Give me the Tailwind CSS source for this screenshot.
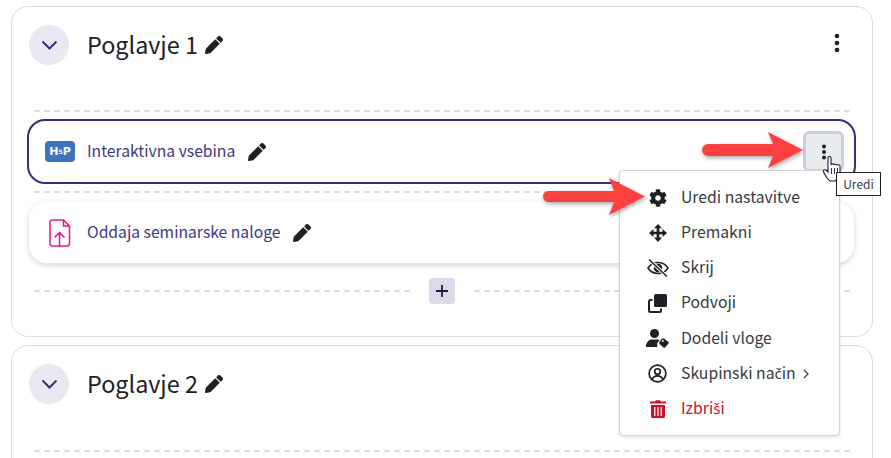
<!DOCTYPE html>
<html><head><meta charset="utf-8"><script src="https://cdn.jsdelivr.net/npm/@tailwindcss/browser@4"></script></head>
<body class="bg-white overflow-hidden font-['Noto_Sans_CJK_SC',sans-serif] text-[#1d2125]">
<div class="relative w-[891px] h-[458px] overflow-hidden">
  <div class="flex flex-col gap-[8px] pl-[11px] pr-[18px] pt-[6px]">
    <section class="h-[331px] border border-[#dcdcdc] rounded-[17px] pt-[18px] px-[22px]">
      <div class="flex items-center h-[40px] -ml-[5px]">
        <span class="w-[40px] h-[40px] rounded-full bg-[#eae8f3] flex items-center justify-center"><svg width="17" height="10" viewBox="0 0 17 10" fill="none" stroke="#3a2c7c" stroke-width="2"><path d="M1.500 1.500l7 7 7-7"/></svg></span>
        <h3 class="ml-[18px] text-[23.4px] leading-[40px] mb-[2px]">Poglavje 1</h3>
        <svg class="ml-[7px] mb-[1px]" width="18" height="18" viewBox="0 0 512 512" fill="#1d2125"><path d="M497.9 142.1l-46.1 46.1c-4.7 4.7-12.3 4.7-17 0l-111-111c-4.7-4.7-4.7-12.3 0-17l46.1-46.1c18.7-18.7 49.1-18.7 67.9 0l60.1 60.1c18.8 18.7 18.8 49.1 0 67.9zM284.2 99.8L21.6 362.4.4 483.9c-2.9 16.4 11.4 30.6 27.8 27.8l121.5-21.3 262.6-262.6c4.7-4.7 4.7-12.3 0-17l-111-111c-4.8-4.7-12.4-4.7-17.1 0z"/></svg>
        <svg class="ml-auto mr-[5px] mb-[5px]" width="16" height="20" viewBox="0 0 16 20" fill="#1d2125"><circle cx="8" cy="3" r="2.300"/><circle cx="8" cy="10" r="2.300"/><circle cx="8" cy="17" r="2.300"/></svg>
      </div>
      <div class="mt-[45px] h-[2px] bg-[repeating-linear-gradient(90deg,#dcdcdc_0_6px,transparent_6px_10px)]"></div>
      <div class="mt-[7px] -ml-[7px] -mr-[6px] h-[65px] border-2 border-[#3a2c7c] rounded-[18px] flex items-center pl-[16px] pr-[10px] bg-white">
        <span class="w-[30px] h-[21px] rounded-[4px] bg-[#3c74bd] flex items-center justify-center text-white font-['DejaVu_Sans',sans-serif] font-bold leading-none"><span class="text-[11px]">H</span><span class="text-[6px]">5</span><span class="text-[11px]">P</span></span>
        <span class="ml-[12px] text-[#3f3585] text-[15.7px] leading-[20px] mb-[2px]">Interaktivna vsebina</span>
        <svg class="ml-[13px]" width="18" height="18" viewBox="0 0 512 512" fill="#1d2125"><path d="M497.9 142.1l-46.1 46.1c-4.7 4.7-12.3 4.7-17 0l-111-111c-4.7-4.7-4.7-12.3 0-17l46.1-46.1c18.7-18.7 49.1-18.7 67.9 0l60.1 60.1c18.8 18.7 18.8 49.1 0 67.9zM284.2 99.8L21.6 362.4.4 483.9c-2.9 16.4 11.4 30.6 27.8 27.8l121.5-21.3 262.6-262.6c4.7-4.7 4.7-12.3 0-17l-111-111c-4.8-4.7-12.4-4.7-17.1 0z"/></svg>
        <span class="ml-auto w-[41px] h-[41px] rounded-[6px] border-[3px] border-[#cfcde0] bg-[#e9ecef] flex items-center justify-center"><svg width="8" height="16" viewBox="0 0 8 16" fill="#1d2125"><circle cx="4" cy="2.500" r="2"/><circle cx="4" cy="8" r="2"/><circle cx="4" cy="13.500" r="2"/></svg></span>
      </div>
      <div class="mt-[7px] h-[2px] bg-[repeating-linear-gradient(90deg,#dcdcdc_0_6px,transparent_6px_10px)]"></div>
      <div class="mt-[9px] -ml-[5px] -mr-[4px] h-[61px] rounded-[18px] bg-white shadow-[0_2px_6px_rgba(0,0,0,0.18)] flex items-center pl-[20px]">
        <svg width="22" height="28" viewBox="0 0 22 28" fill="none" stroke="#f0138f" stroke-width="1.500"><path d="M3.500 1h11l6 6v17.500a2.500 2.500 0 0 1-2.500 2.500H3.500a2.500 2.500 0 0 1-2.500-2.500V3.500A2.500 2.500 0 0 1 3.500 1zM14.500 1v6h6M10.500 28V14M5.500 18.500l5-5 5 5"/></svg>
        <span class="ml-[16px] text-[#3f3585] text-[15.7px] leading-[20px] mb-[2px]">Oddaja seminarske naloge</span>
        <svg class="ml-[13px]" width="18" height="18" viewBox="0 0 512 512" fill="#1d2125"><path d="M497.9 142.1l-46.1 46.1c-4.7 4.7-12.3 4.7-17 0l-111-111c-4.7-4.7-4.7-12.3 0-17l46.1-46.1c18.7-18.7 49.1-18.7 67.9 0l60.1 60.1c18.8 18.7 18.8 49.1 0 67.9zM284.2 99.8L21.6 362.4.4 483.9c-2.9 16.4 11.4 30.6 27.8 27.8l121.5-21.3 262.6-262.6c4.7-4.7 4.7-12.3 0-17l-111-111c-4.8-4.7-12.4-4.7-17.1 0z"/></svg>
      </div>
      <div class="mt-[15px] flex items-center h-[26px]">
        <div class="flex-1 h-[2px] bg-[repeating-linear-gradient(90deg,#dcdcdc_0_6px,transparent_6px_10px)]"></div>
        <span class="mx-[19px] w-[26px] h-[26px] rounded-[4px] bg-[#dcdaea] flex items-center justify-center"><svg width="14" height="14" viewBox="0 0 14 14" stroke="#1d1748" stroke-width="1.800"><path d="M7 1v12M1 7h12"/></svg></span>
        <div class="flex-1 h-[2px] bg-[repeating-linear-gradient(90deg,#dcdcdc_0_6px,transparent_6px_10px)]"></div>
      </div>
    </section>
    <section class="h-[200px] border border-[#dcdcdc] rounded-[17px] pt-[18px] px-[22px]">
      <div class="flex items-center h-[40px] -ml-[5px]">
        <span class="w-[40px] h-[40px] rounded-full bg-[#eae8f3] flex items-center justify-center"><svg width="17" height="10" viewBox="0 0 17 10" fill="none" stroke="#3a2c7c" stroke-width="2"><path d="M1.500 1.500l7 7 7-7"/></svg></span>
        <h3 class="ml-[18px] text-[23.4px] leading-[40px] mb-[2px]">Poglavje 2</h3>
        <svg class="ml-[7px] mb-[1px]" width="18" height="18" viewBox="0 0 512 512" fill="#1d2125"><path d="M497.9 142.1l-46.1 46.1c-4.7 4.7-12.3 4.7-17 0l-111-111c-4.7-4.7-4.7-12.3 0-17l46.1-46.1c18.7-18.7 49.1-18.7 67.9 0l60.1 60.1c18.8 18.7 18.8 49.1 0 67.9zM284.2 99.8L21.6 362.4.4 483.9c-2.9 16.4 11.4 30.6 27.8 27.8l121.5-21.3 262.6-262.6c4.7-4.7 4.7-12.3 0-17l-111-111c-4.8-4.7-12.4-4.7-17.1 0z"/></svg>
      </div>
      <div class="mt-[46px] h-[2px] bg-[repeating-linear-gradient(90deg,#dcdcdc_0_6px,transparent_6px_10px)]"></div>
    </section>
  </div>

  <!-- dropdown menu -->
  <div class="absolute left-[619px] top-[170px] w-[221px] h-[266px] bg-white border border-[#d5d5d5] rounded-[4px] shadow-[0_1px_3px_rgba(0,0,0,0.12)] flex flex-col pt-[9px] text-[15.75px] text-[#343a40]">
    <div class="flex items-center h-[35.200px] pl-[29px]"><svg class="w-[18px] h-[18px] shrink-0" viewBox="0 0 512 512" fill="#1d2125"><path d="M487.400 315.700l-42.600-24.600c4.300-23.200 4.300-47 0-70.200l42.600-24.600c4.900-2.800 7.100-8.600 5.500-14-11.100-35.600-30-67.800-54.700-94.600-3.800-4.100-10-5.100-14.800-2.300L380.800 110c-17.900-15.400-38.500-27.300-60.800-35.100V25.800c0-5.600-3.900-10.500-9.400-11.700-36.700-8.200-74.300-7.800-109.200 0-5.500 1.200-9.400 6.100-9.400 11.700V75c-22.200 7.900-42.800 19.800-60.800 35.100L88.700 85.500c-4.900-2.800-11-1.900-14.800 2.300-24.700 26.700-43.600 58.900-54.700 94.600-1.700 5.400.6 11.200 5.500 14L67.300 221c-4.300 23.200-4.300 47 0 70.200l-42.600 24.600c-4.900 2.800-7.100 8.600-5.500 14 11.100 35.600 30 67.800 54.700 94.600 3.800 4.100 10 5.100 14.800 2.300l42.600-24.600c17.900 15.400 38.500 27.300 60.800 35.100v49.200c0 5.600 3.900 10.500 9.400 11.700 36.700 8.200 74.300 7.800 109.200 0 5.500-1.200 9.400-6.100 9.400-11.700v-49.200c22.200-7.900 42.800-19.800 60.800-35.100l42.600 24.600c4.900 2.800 11 1.900 14.800-2.300 24.700-26.700 43.600-58.900 54.700-94.600 1.500-5.500-.7-11.300-5.600-14.100zM256 336c-44.100 0-80-35.900-80-80s35.900-80 80-80 80 35.900 80 80-35.900 80-80 80z"/></svg><span class="ml-[14px] mb-[2px]">Uredi nastavitve</span></div>
    <div class="flex items-center h-[35.200px] pl-[29px]"><svg class="w-[18px] h-[18px] shrink-0" viewBox="0 0 20 20" fill="#1d2125"><path d="M10 0l4.500 4.800h-3V8.500H15V5.500L20 10l-5 4.500v-3h-3.500V15h3L10 20l-4.500-5h3v-3.500H5v3L0 10l5-4.500v3h3.500V4.800h-3z"/></svg><span class="ml-[14px] mb-[2px]">Premakni</span></div>
    <div class="flex items-center h-[35.200px] pl-[27px]"><svg class="w-[22px] h-[18px] shrink-0" viewBox="0 0 22 18" fill="none" stroke="#1d2125" stroke-width="1.500"><path d="M1 9C3.500 5 7 3.500 11 3.500S18.500 5 21 9C18.500 13 15 14.500 11 14.500S3.500 13 1 9z"/><path d="M11 5.500a3.500 3.500 0 1 1 0 7 3.500 3.500 0 0 1 0-7z" fill="#1d2125"/><path d="M2 .5l18 17" stroke="#fff" stroke-width="3.500"/><path d="M2 .5l18 17" stroke-width="1.500"/></svg><span class="ml-[12px] mb-[2px]">Skrij</span></div>
    <div class="flex items-center h-[35.200px] pl-[28px]"><svg class="w-[19px] h-[19px] shrink-0" viewBox="0 0 19 19"><rect x="6" y="0" width="13" height="13" rx="1.500" fill="#1d2125"/><path d="M4.500 6H2.500A1.500 1.500 0 0 0 1 7.500v9A1.500 1.500 0 0 0 2.500 18h9a1.500 1.500 0 0 0 1.500-1.500v-2" fill="none" stroke="#1d2125" stroke-width="2"/></svg><span class="ml-[14px] mb-[2px]">Podvoji</span></div>
    <div class="flex items-center h-[35.200px] pl-[26px]"><svg class="w-[23px] h-[19px] shrink-0" viewBox="0 0 23 19" fill="#1d2125"><circle cx="8.500" cy="4.500" r="4.500"/><path d="M0 18c0-5 3-7.500 6-7.500h5c1 0 2 .3 2.800.8l-2 2a2 2 0 0 0-.6 1.500V18z"/><path d="M13.500 13l2.500-3.500h2l4.500 3.500c.5.500.5 1 0 1.500l-3.500 4c-.5.500-1 .5-1.500 0l-4-3.500c-.5-.500-.5-1.500 0-2z"/><circle cx="16.800" cy="12" r=".9" fill="#fff"/></svg><span class="ml-[12px] mb-[2px]">Dodeli vloge</span></div>
    <div class="flex items-center h-[35.200px] pl-[28px]"><svg class="w-[19px] h-[19px] shrink-0" viewBox="0 0 20 20" fill="none" stroke="#1d2125" stroke-width="1.800"><circle cx="10" cy="10" r="8.800"/><circle cx="10" cy="8" r="3"/><path d="M4.500 16c1-2.500 3-3.500 5.500-3.500s4.500 1 5.500 3.500"/></svg><span class="ml-[14px] mb-[2px]">Skupinski na<span class="font-['Noto_Sans',sans-serif] text-[15px]">č</span>in</span><svg class="ml-[7px]" width="6" height="10" viewBox="0 0 6 10" fill="none" stroke="#343a40" stroke-width="1.200"><path d="M1 1l4 4-4 4"/></svg></div>
    <div class="flex items-center h-[35.200px] pl-[30px] text-[#ca1126]"><svg class="w-[16px] h-[18px] shrink-0" viewBox="0 0 16 18" fill="#ca1126"><path d="M0 1.500h5L6 .2h4l1 1.300h5V3.500H0zM1 5h14v11.500a1.500 1.500 0 0 1-1.500 1.500h-11A1.500 1.500 0 0 1 1 16.500z"/><path d="M4.800 7v9M8 7v9M11.200 7v9" stroke="#fff" stroke-width="1.200"/></svg><span class="ml-[15px] mb-[2px]">Izbri<span class="font-['Noto_Sans',sans-serif] text-[15px]">š</span>i</span></div>
  </div>

  <!-- annotation arrows -->
  <svg class="absolute left-[695px] top-[128px]" width="115" height="50" viewBox="0 0 115 50"><defs><filter id="a" x="-20%" y="-40%" width="140%" height="180%"><feDropShadow dx="1" dy="2" stdDeviation="2" flood-color="#000" flood-opacity=".35"/></filter></defs><path d="M13 16H78L73 4l35 18-35 18 5-12H13a6 6 0 0 1 0-12z" fill="#fb4040" filter="url(#a)"/></svg>
  <svg class="absolute left-[537px] top-[173px]" width="115" height="50" viewBox="0 0 115 50"><path d="M11.500 18H77L72 5l36 18.500L72 42l5-13H11.500a5.500 5.500 0 0 1 0-11z" fill="#fb4040" filter="url(#a)"/></svg>

  <!-- cursor -->
  <svg class="absolute left-[822px] top-[156px]" width="20" height="27" viewBox="0 0 20 27"><path d="M6 2c0-2 3-2 3 0v7c0-1.500 3-1.500 3 0 0-1 3-1 3 .500 0-1 3-1 3 .500v6c0 4-2 7-5 9H8c-1.500-1-5-6-6.500-9-.8-2 1.500-3 3-1.500L6 16z" fill="#fff" stroke="#1d1b40" stroke-width="1.100"/><path d="M9.500 12v6M12.500 12v6M15.500 12v6" stroke="#1d1b40" stroke-width=".9"/></svg>

  <!-- tooltip -->
  <div class="absolute left-[836px] top-[172px] w-[45px] h-[24px] bg-white border border-[#222] flex items-center justify-center text-[12px] leading-none text-[#3a3a4a]">Uredi</div>
</div>
</body></html>
